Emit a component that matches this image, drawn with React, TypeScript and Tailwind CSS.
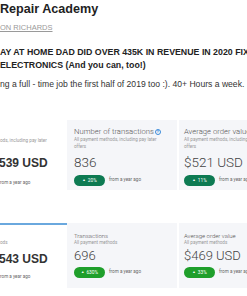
import React from "react";

const sans = { fontFamily: '"Liberation Sans", Arial, sans-serif' };
const light = { fontFamily: 'Roboto, "Liberation Sans", sans-serif' };

function Badge({ text, dark }: { text: string; dark?: boolean }) {
  return (
    <div className="flex items-center gap-[4px]">
      <div
        className={`flex h-[11px] w-[31px] items-center justify-center rounded-full text-[4.8px] text-white ${
          dark ? "bg-[#0d7a52]" : "bg-[#1f9f2b]"
        }`}
      >
        <span className="mr-[2px] text-[3.5px]">▲</span>
        {text}
      </div>
      <span className="text-[4.6px] text-[#666]">from a year ago</span>
    </div>
  );
}

function Card({
  title,
  titleSize,
  sub,
  value,
  badge,
  dark,
  help,
  first,
}: {
  title: string;
  titleSize: "lg" | "sm";
  sub: React.ReactNode;
  value: string;
  badge: string;
  dark?: boolean;
  help?: boolean;
  first?: boolean;
}) {
  const lg = titleSize === "lg";
  return (
    <div
      className={`flex flex-col bg-[#f5f6f9] ${first ? "w-[110px] pl-[7px]" : "w-[80px] pl-[5px]"} ${
        lg ? "h-[70px] pt-[6px]" : "h-[65px] pt-[8px]"
      }`}
      style={light}
    >
      <div
        className={`flex items-center whitespace-nowrap font-light text-[#555] ${
          lg ? "h-[11px] text-[7.7px]" : "h-[8px] text-[6px]"
        }`}
      >
        {title}
        {help && (
          <span className="ml-[1px] flex h-[6px] w-[6px] items-center justify-center rounded-full border border-[#3b8bd9] text-[4px] font-bold leading-none text-[#3b8bd9]">
            ?
          </span>
        )}
      </div>
      <div className={`whitespace-nowrap text-[4.6px] text-[#999] ${lg ? "leading-[6.5px]" : "leading-[8px]"}`}>
        {sub}
      </div>
      <div
        className={`whitespace-nowrap font-light text-[#444] ${
          lg ? "mt-[3px] h-[19px] text-[13.5px] leading-[19px]" : "mt-[-1px] h-[19px] text-[13px] leading-[19px]"
        }`}
      >
        {value}
      </div>
      <div className={lg ? "mt-[3px]" : "mt-[2px]"}>
        <Badge text={badge} dark={dark} />
      </div>
    </div>
  );
}

function LeftCol({
  sub,
  value,
  subTop,
  valueGap,
  fromGap,
  topBorder,
  h,
}: {
  sub: string;
  value: string;
  subTop: number;
  valueGap: number;
  fromGap: number;
  topBorder?: boolean;
  h: number;
}) {
  return (
    <div
      className={`flex w-[67px] shrink-0 flex-col ${topBorder ? "border-t-[2px] border-[#6aa8de]" : ""}`}
      style={{ height: h, paddingTop: subTop }}
    >
      <div className="whitespace-nowrap text-[4.6px] leading-[6px] text-[#999]" style={light}>
        {sub}
      </div>
      <div
        className="ml-[-1px] whitespace-nowrap text-[12px] font-bold leading-[16px] text-[#333]"
        style={{ ...sans, marginTop: valueGap }}
      >
        {value}
      </div>
      <div
        className="whitespace-nowrap text-[4.6px] leading-[6px] text-[#666]"
        style={{ ...light, marginTop: fromGap }}
      >
        rom a year ago
      </div>
    </div>
  );
}

export default function App() {
  return (
    <div className="h-[296px] w-[247px] overflow-hidden bg-white text-[#222]" style={sans}>
      <div className="pt-[1px]">
        <div className="whitespace-nowrap text-[12.6px] font-bold leading-[16px] text-[#222]">
          Repair Academy
        </div>
        <div className="mt-[6px] whitespace-nowrap text-[7.5px] leading-[10px] text-[#9a9a9a] underline">
          ON RICHARDS
        </div>
        <div className="mt-[13px] whitespace-nowrap text-[8.8px] font-bold leading-[12.5px] text-[#222]">
          AY AT HOME DAD DID OVER 435K IN REVENUE IN 2020 FIX
          <br />
          ELECTRONICS (And you can, too!)
        </div>
        <div className="mt-[7px] whitespace-nowrap text-[8.6px] leading-[12px] text-[#333]">
          ng a full - time job the first half of 2019 too :). 40+ Hours a week.
        </div>
      </div>

      <div className="mt-[30px] flex">
        <LeftCol sub="ods, including pay later" value="539 USD" subTop={18} valueGap={11} fromGap={9} h={70} />
        <div className="flex gap-[2px]">
          <Card
            title="Number of transactions"
            titleSize="lg"
            help
            first
            sub={
              <>
                All payment methods, including pay later
                <br />
                offers
              </>
            }
            value="836"
            badge="20%"
            dark
          />
          <Card
            title="Average order value"
            titleSize="lg"
            sub={
              <>
                All payment methods, including
                <br />
                offers
              </>
            }
            value="$521 USD"
            badge="11%"
            dark
          />
        </div>
      </div>

      <div className="mt-[33px] flex">
        <LeftCol sub="ods" value="543 USD" subTop={15} valueGap={5} fromGap={7} topBorder h={65} />
        <div className="flex gap-[2px]">
          <Card
            title="Transactions"
            titleSize="sm"
            first
            sub="All payment methods"
            value="696"
            badge="630%"
          />
          <Card
            title="Average order value"
            titleSize="sm"
            sub="All payment methods"
            value="$469 USD"
            badge="33%"
          />
        </div>
      </div>
    </div>
  );
}
